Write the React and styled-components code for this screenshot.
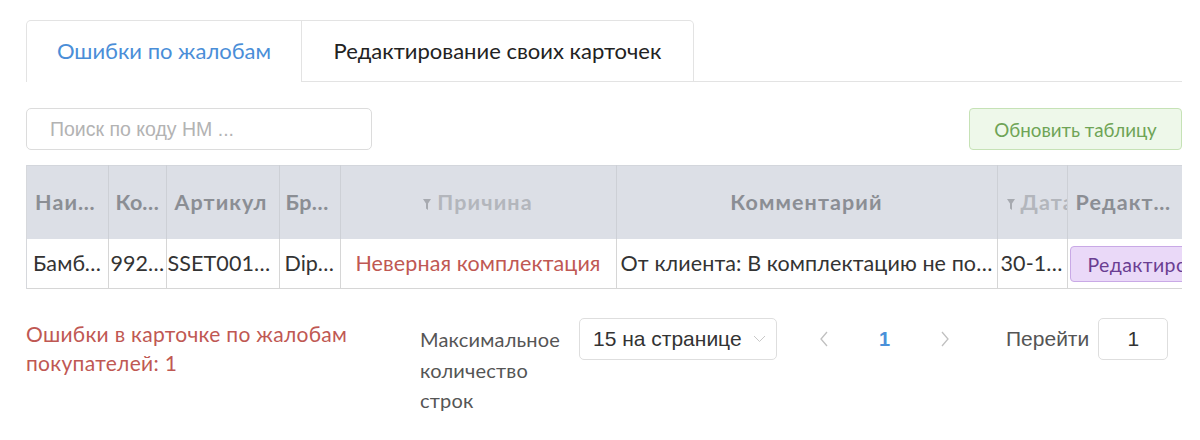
import React from "react";
import styled, { createGlobalStyle } from "styled-components";

const Global = createGlobalStyle`
  html, body { margin: 0; padding: 0; background: #fff; }
  body { font-family: Lato, "Noto Sans", sans-serif; color: #333; }
  * { box-sizing: border-box; }
`;

const Page = styled.div`
  width: 1200px;
  height: 440px;
  padding: 20px 18px 0 26px;
  overflow: hidden;
`;

const TabBar = styled.div`
  display: flex;
  height: 62px;
`;

const Tab = styled.div`
  display: flex;
  align-items: center;
  justify-content: center;
  width: ${(p) => p.$w}px;
  font-size: 22px;
  padding-bottom: 2px;
  color: ${(p) => (p.$active ? "#4a8ed8" : "#222")};
  border: 1px solid #e3e3e3;
  border-left: ${(p) => (p.$active ? "1px solid #e3e3e3" : "none")};
  border-bottom: ${(p) => (p.$active ? "none" : "1px solid #e3e3e3")};
  border-radius: ${(p) => (p.$active ? "5px 0 0 0" : "0 5px 0 0")};
  background: #fff;
`;

const TabFill = styled.div`
  flex: 1;
  border-bottom: 1px solid #e3e3e3;
`;

const Toolbar = styled.div`
  display: flex;
  justify-content: space-between;
  align-items: center;
  margin-top: 26px;
`;

const Search = styled.input`
  width: 346px;
  height: 42px;
  border: 1px solid #dcdcdc;
  border-radius: 5px;
  padding: 0 23px;
  font-family: "Liberation Sans", Arial, sans-serif;
  font-size: 19.5px;
  outline: none;
  &::placeholder { color: #b3b3b3; }
`;

const RefreshButton = styled.button`
  width: 213px;
  height: 42px;
  border: 1px solid #c6e2b6;
  background: #eef8ea;
  border-radius: 4px;
  color: #6fa456;
  font-family: Lato, sans-serif;
  font-size: 18.8px;
  padding: 0;
`;

const TableWrap = styled.div`
  margin-top: 15px;
  width: 1156px;
  overflow: hidden;
  border-left: 1px solid #d6d8dc;
`;

const Table = styled.table`
  table-layout: fixed;
  border-collapse: collapse;
  width: 1156px;
`;

const Th = styled.th`
  height: 73px;
  background: #dcdfe6;
  border-right: 1px solid #cdd0d6;
  border-top: 1px solid #d3d6dc;
  padding: 0 ${(p) => (p.$padR != null ? p.$padR : 8)}px 0 ${(p) => (p.$pad != null ? p.$pad : 8)}px;
  font-size: 21.5px;
  font-weight: 700;
  color: ${(p) => (p.$muted ? "#b3b6bc" : "#8b8e94")};
  text-align: ${(p) => p.$align || "left"};
  white-space: nowrap;
  overflow: hidden;
  text-overflow: ${(p) => (p.$clip ? "clip" : "ellipsis")};
  letter-spacing: ${(p) => (p.$tight ? 0.3 : 1.1)}px;
`;

const Td = styled.td`
  height: 50px;
  border-right: 1px solid #d6d6d6;
  border-bottom: 1px solid #d6d6d6;
  padding: 0 ${(p) => (p.$padR != null ? p.$padR : p.$pad != null ? p.$pad : 6)}px 0
    ${(p) => (p.$pad != null ? p.$pad : 6)}px;
  font-size: 21.5px;
  letter-spacing: ${(p) => (p.$tight ? 0 : 0.1)}px;
  color: ${(p) => (p.$red ? "#bf5853" : "#333")};
  text-align: ${(p) => p.$align || "left"};
  white-space: nowrap;
  overflow: hidden;
  text-overflow: ${(p) => (p.$clip ? "clip" : "ellipsis")};
`;

const FilterIcon = styled.svg`
  width: 8px;
  height: 11px;
  margin-right: 6px;
  vertical-align: 0px;
`;

const EditButton = styled.button`
  height: 36px;
  width: 150px;
  margin-top: 2px;
  border: 1px solid #c9a9e6;
  background: #ead9f8;
  border-radius: 4px;
  color: #6a3e92;
  font-family: Lato, sans-serif;
  font-size: 19.5px;
  letter-spacing: 0.4px;
  padding: 0 0 0 17px;
  text-align: left;
  white-space: nowrap;
`;

const Footer = styled.div`
  display: flex;
  align-items: flex-start;
  margin-top: 29px;
`;

const ErrorText = styled.div`
  width: 394px;
  font-size: 21px;
  letter-spacing: 0.3px;
  line-height: 29px;
  color: #bf5853;
  padding-top: 1px;
`;

const RowsLabel = styled.div`
  width: 159px;
  padding-right: 10px;
  font-size: 20px;
  letter-spacing: 0.2px;
  line-height: 30.5px;
  color: #555;
  margin-top: 6px;
`;

const Select = styled.div`
  width: 198px;
  height: 42px;
  border: 1px solid #dedede;
  border-radius: 5px;
  display: flex;
  align-items: center;
  justify-content: space-between;
  padding: 0 10px 0 13px;
  font-family: "Liberation Sans", Arial, sans-serif;
  font-size: 21px;
  color: #333;
`;

const Pager = styled.div`
  display: flex;
  align-items: center;
  height: 42px;
  margin-left: 42px;
`;

const PageArrow = styled.svg`
  width: 10px;
  height: 16px;
`;

const PageNum = styled.span`
  width: 111px;
  text-align: center;
  font-family: "Liberation Sans", Arial, sans-serif;
  font-size: 20px;
  font-weight: 700;
  color: #4a90d9;
`;

const Jump = styled.div`
  display: flex;
  align-items: center;
  gap: 9px;
  margin-left: 56px;
  height: 42px;
  font-family: "Liberation Sans", Arial, sans-serif;
  font-size: 21px;
  color: #555;
`;

const JumpInput = styled.div`
  width: 70px;
  height: 42px;
  border: 1px solid #dedede;
  border-radius: 5px;
  display: flex;
  align-items: center;
  justify-content: center;
  color: #333;
`;

const Funnel = () => (
  <FilterIcon viewBox="0 0 8 11">
    <path d="M0 0H8L5 4.5V11L3 9.5V4.5Z" fill="#a7aab0" />
  </FilterIcon>
);

const cols = [81, 58, 113, 61, 276, 381, 70, 116];

export default function App() {
  return (
    <Page>
      <Global />
      <TabBar>
        <Tab $active $w={276}>Ошибки по жалобам</Tab>
        <Tab $w={392}>Редактирование своих карточек</Tab>
        <TabFill />
      </TabBar>
      <Toolbar>
        <Search placeholder="Поиск по коду НМ ..." />
        <RefreshButton>Обновить таблицу</RefreshButton>
      </Toolbar>
      <TableWrap>
        <Table>
          <colgroup>
            {cols.map((w, i) => (
              <col key={i} style={{ width: w }} />
            ))}
          </colgroup>
          <thead>
            <tr>
              <Th>Наименование</Th>
              <Th $pad={7} $padR={2} $tight>Код НМ</Th>
              <Th>Артикул</Th>
              <Th $pad={6} $padR={2} $tight>Бренд</Th>
              <Th $align="center" $muted>
                <Funnel />Причина
              </Th>
              <Th $align="center">Комментарий</Th>
              <Th $muted $clip $pad={9} $padR={6}>
                <Funnel />Дата
              </Th>
              <Th>Редактировать</Th>
            </tr>
          </thead>
          <tbody>
            <tr>
              <Td>Бамбуковая</Td>
              <Td $pad={2} $padR={0} $tight>99200123</Td>
              <Td $pad={1} $padR={8}>SSET001cx</Td>
              <Td $pad={5} $padR={5} $tight>Dipsy</Td>
              <Td $red $align="center">Неверная комплектация</Td>
              <Td $pad={4}>От клиента: В комплектацию не поступил товар</Td>
              <Td $pad={3}>30-11-2023</Td>
              <Td $pad={2} $clip>
                <EditButton>Редактировать</EditButton>
              </Td>
            </tr>
          </tbody>
        </Table>
      </TableWrap>
      <Footer>
        <ErrorText>Ошибки в карточке по жалобам покупателей: 1</ErrorText>
        <RowsLabel>Максимальное количество строк</RowsLabel>
        <Select>
          <span>15 на странице</span>
          <svg width="13" height="8" viewBox="0 0 13 8">
            <path d="M1 1L6.5 6.5L12 1" stroke="#c8c8c8" strokeWidth="1" fill="none" />
          </svg>
        </Select>
        <Pager>
          <PageArrow viewBox="0 0 10 16">
            <path d="M8 1L2 8L8 15" stroke="#c0c0c0" strokeWidth="1.3" fill="none" />
          </PageArrow>
          <PageNum>1</PageNum>
          <PageArrow viewBox="0 0 10 16">
            <path d="M2 1L8 8L2 15" stroke="#c0c0c0" strokeWidth="1.3" fill="none" />
          </PageArrow>
        </Pager>
        <Jump>
          <span>Перейти</span>
          <JumpInput>1</JumpInput>
        </Jump>
      </Footer>
    </Page>
  );
}
